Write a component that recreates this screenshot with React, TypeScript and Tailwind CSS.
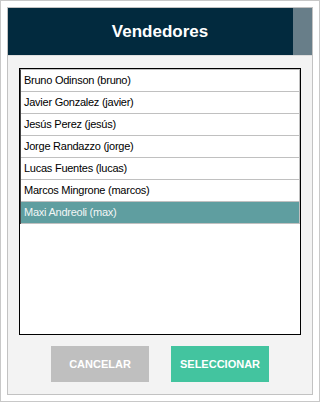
import React from "react";

const users = [
  "Bruno Odinson (bruno)",
  "Javier Gonzalez (javier)",
  "Jesús Perez (jesús)",
  "Jorge Randazzo (jorge)",
  "Lucas Fuentes (lucas)",
  "Marcos Mingrone (marcos)",
  "Maxi Andreoli (max)",
];

export default function App() {
  const selected = 6;
  return (
    <div
      className="w-[320px] h-[402px] border border-[#c8c8c8] bg-white p-[6px]"
      style={{ fontFamily: '"Liberation Sans", Arial, sans-serif' }}
    >
      <div className="h-full border border-[#c2c2c2] bg-[#f3f3f3] flex flex-col">
        <div className="h-[48px] flex border-b border-[#dedede]">
          <div className="flex-1 bg-[#022a3e] flex items-center justify-center pl-[19px]">
            <span className="text-white font-bold text-[17px] leading-none">Vendedores</span>
          </div>
          <div className="w-[19px] bg-[#687e89]" />
        </div>
        <div className="ml-[11px] mt-[12px] w-[282px] h-[267px] border border-black bg-white">
          <div className="border-r border-[#c0c0c0] border-t border-t-[#c0c0c0] border-l border-l-[#444]">
            {users.map((u, i) => (
              <div
                key={u}
                className={
                  "h-[22px] border-b border-[#c0c0c0] flex items-center pl-[3px] text-[11px] tracking-[-0.25px] " +
                  (i === selected ? "bg-[#5f9ea0] text-[#f2f6f6]" : "text-black")
                }
              >
                {u}
              </div>
            ))}
          </div>
        </div>
        <div className="mt-[11px] flex justify-center gap-[22px]">
          <button className="w-[98px] h-[36px] bg-[#bfbfbf] text-white font-bold text-[11px]">
            CANCELAR
          </button>
          <button className="w-[98px] h-[36px] bg-[#43c49f] text-white font-bold text-[11px]">
            SELECCIONAR
          </button>
        </div>
      </div>
    </div>
  );
}
